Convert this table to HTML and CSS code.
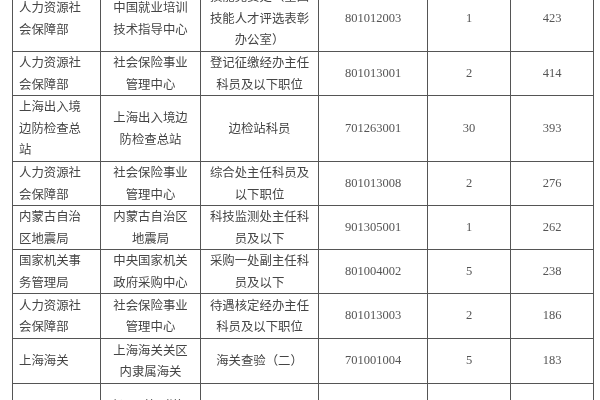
FILE: index.html
```html
<!DOCTYPE html>
<html lang="zh">
<head>
<meta charset="utf-8">
<link rel="stylesheet" href="styles.css">
</head>
<body>
<table class="grid">
  <colgroup>
    <col class="c1"><col class="c2"><col class="c3"><col class="c4"><col class="c5"><col class="c6">
  </colgroup>
  <tr class="h3">
    <td class="org">人力资源社<br>会保障部</td>
    <td class="cn">中国就业培训<br>技术指导中心</td>
    <td class="cn">技能竞赛处（全国<br>技能人才评选表彰<br>办公室）</td>
    <td class="num">801012003</td>
    <td class="num">1</td>
    <td class="num">423</td>
  </tr>
  <tr class="h2">
    <td class="org">人力资源社<br>会保障部</td>
    <td class="cn">社会保险事业<br>管理中心</td>
    <td class="cn">登记征缴经办主任<br>科员及以下职位</td>
    <td class="num">801013001</td>
    <td class="num">2</td>
    <td class="num">414</td>
  </tr>
  <tr class="h3">
    <td class="org">上海出入境<br>边防检查总<br>站</td>
    <td class="cn">上海出入境边<br>防检查总站</td>
    <td class="cn">边检站科员</td>
    <td class="num">701263001</td>
    <td class="num">30</td>
    <td class="num">393</td>
  </tr>
  <tr class="h2">
    <td class="org">人力资源社<br>会保障部</td>
    <td class="cn">社会保险事业<br>管理中心</td>
    <td class="cn">综合处主任科员及<br>以下职位</td>
    <td class="num">801013008</td>
    <td class="num">2</td>
    <td class="num">276</td>
  </tr>
  <tr class="h2">
    <td class="org">内蒙古自治<br>区地震局</td>
    <td class="cn">内蒙古自治区<br>地震局</td>
    <td class="cn">科技监测处主任科<br>员及以下</td>
    <td class="num">901305001</td>
    <td class="num">1</td>
    <td class="num">262</td>
  </tr>
  <tr class="h2">
    <td class="org">国家机关事<br>务管理局</td>
    <td class="cn">中央国家机关<br>政府采购中心</td>
    <td class="cn">采购一处副主任科<br>员及以下</td>
    <td class="num">801004002</td>
    <td class="num">5</td>
    <td class="num">238</td>
  </tr>
  <tr class="h2b">
    <td class="org">人力资源社<br>会保障部</td>
    <td class="cn">社会保险事业<br>管理中心</td>
    <td class="cn">待遇核定经办主任<br>科员及以下职位</td>
    <td class="num">801013003</td>
    <td class="num">2</td>
    <td class="num">186</td>
  </tr>
  <tr class="h2b">
    <td class="org">上海海关</td>
    <td class="cn">上海海关关区<br>内隶属海关</td>
    <td class="cn">海关查验（二）</td>
    <td class="num">701001004</td>
    <td class="num">5</td>
    <td class="num">183</td>
  </tr>
  <tr class="h3">
    <td class="org">商务部</td>
    <td class="cn">欧洲司等（详见<br>附件）</td>
    <td class="cn">翻译</td>
    <td class="num">801001001</td>
    <td class="num">1</td>
    <td class="num">179</td>
  </tr>
</table>
</body>
</html>
```
FILE: styles.css
```css
html, body {
  margin: 0;
  padding: 0;
  background: #ffffff;
  overflow: hidden;
}
body {
  width: 600px;
  height: 400px;
}
.grid {
  border-collapse: collapse;
  table-layout: fixed;
  width: 582px;
  margin: -15px 0 0 12px;
  color: #454545;
  font-family: "Noto Sans CJK SC", "Noto Sans", sans-serif;
  font-size: 12.4px;
  line-height: 21.5px;
  filter: blur(0.35px);
}
.grid td {
  border: 1.5px solid #555;
  padding: 0;
  vertical-align: middle;
}
.c1 { width: 88px; }
.c2 { width: 100px; }
.c3 { width: 118px; }
.c4 { width: 109px; }
.c5 { width: 83px; }
.c6 { width: 83px; }
.h3 { height: 66px; }
.h2 { height: 44px; }
.h2b { height: 45px; }
.org {
  text-align: left;
  padding-left: 6px !important;
}
.cn {
  text-align: center;
}
.num {
  text-align: center;
  color: #555;
  font-family: "Liberation Serif", "Times New Roman", serif;
  font-size: 12.5px;
}
```
